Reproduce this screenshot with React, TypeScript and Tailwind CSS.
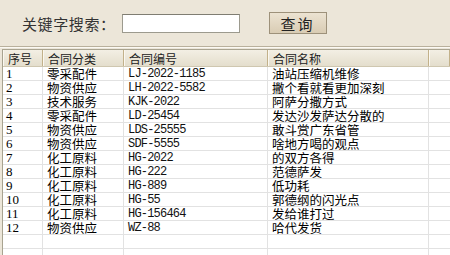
import React from "react";

const rows: [string, string, string, string][] = [
  ["1", "零采配件", "LJ-2022-1185", "油站压缩机维修"],
  ["2", "物资供应", "LH-2022-5582", "撇个看就看更加深刻"],
  ["3", "技术服务", "KJK-2022", "阿萨分撒方式"],
  ["4", "零采配件", "LD-25454", "发达沙发萨达分散的"],
  ["5", "物资供应", "LDS-25555", "敢斗赏广东省管"],
  ["6", "物资供应", "SDF-5555", "啥地方喝的观点"],
  ["7", "化工原料", "HG-2022", "的双方各得"],
  ["8", "化工原料", "HG-222", "范德萨发"],
  ["9", "化工原料", "HG-889", "低功耗"],
  ["10", "化工原料", "HG-55", "郭德纲的闪光点"],
  ["11", "化工原料", "HG-156464", "发给谁打过"],
  ["12", "物资供应", "WZ-88", "哈代发货"],
];

const cjk = { fontFamily: '"Noto Sans CJK SC", "Noto Sans", sans-serif' };
const mono = { fontFamily: '"Liberation Mono", "Noto Sans CJK SC", monospace' };
const serif = { fontFamily: '"Liberation Serif", "Noto Sans CJK SC", serif' };

const headers = ["序号", "合同分类", "合同编号", "合同名称", ""];

export default function App() {
  const allRows: ([string, string, string, string] | null)[] = [...rows, null, null];
  return (
    <div className="w-[450px] h-[255px] overflow-hidden bg-[#ece6d9] flex flex-col" style={cjk}>
      <div className="h-[46px] flex items-center shrink-0">
        <span className="ml-[22px] text-[15px] leading-none text-[#333] tracking-[0.6px]">关键字搜索：</span>
        <div className="ml-[6px] w-[118px] h-[19px] bg-white border border-[#9c9a8e] border-t-[#7f7d72]" />
        <button className="ml-[29px] w-[58px] h-[22px] bg-gradient-to-b from-[#ece3d2] to-[#d9ccb4] border border-[#9d917a] text-[15px] leading-none text-[#222] flex items-center justify-center tracking-[2px]">
          查询
        </button>
      </div>
      <div className="h-[2px] border-t border-[#b9b09c] border-b border-b-[#fbf9f4] shrink-0" />
      <div className="h-[1px] shrink-0" />
      <div className="ml-[2px] flex-1 bg-white border-l border-t border-[#a8a390] overflow-hidden">
        <div className="grid grid-cols-[40px_81px_144px_161px_1fr] h-[17px] bg-gradient-to-b from-[#f3efe4] to-[#e4decd] border-b border-[#cfc7b0]">
          {headers.map((h, i) => (
            <div
              key={i}
              className="border-r border-[#c2b18a] border-l border-l-[#fbf8f0] pl-[4px] text-[12px] leading-[17px] text-[#222] whitespace-nowrap overflow-hidden"
            >
              {h}
            </div>
          ))}
        </div>
        {allRows.map((r, i) => (
          <div key={i} className="grid grid-cols-[40px_81px_144px_161px_1fr] h-[14px] border-b border-[#e2e2e2]">
            <div className="border-r border-[#e2e2e2] pl-[3px] text-[13px] leading-[14px] text-black" style={serif}>
              {r ? r[0] : ""}
            </div>
            <div className="border-r border-[#e2e2e2] pl-[4px] text-[12.5px] leading-[14px] text-black whitespace-nowrap overflow-hidden">
              {r ? r[1] : ""}
            </div>
            <div className="border-r border-[#e2e2e2] pl-[4px] text-[12px] leading-[14px] text-[#111] whitespace-nowrap tracking-[-0.8px] overflow-hidden" style={mono}>
              {r ? r[2] : ""}
            </div>
            <div className="border-r border-[#e2e2e2] pl-[4px] text-[12.5px] leading-[14px] text-black whitespace-nowrap overflow-hidden">
              {r ? r[3] : ""}
            </div>
            <div />
          </div>
        ))}
      </div>
    </div>
  );
}
